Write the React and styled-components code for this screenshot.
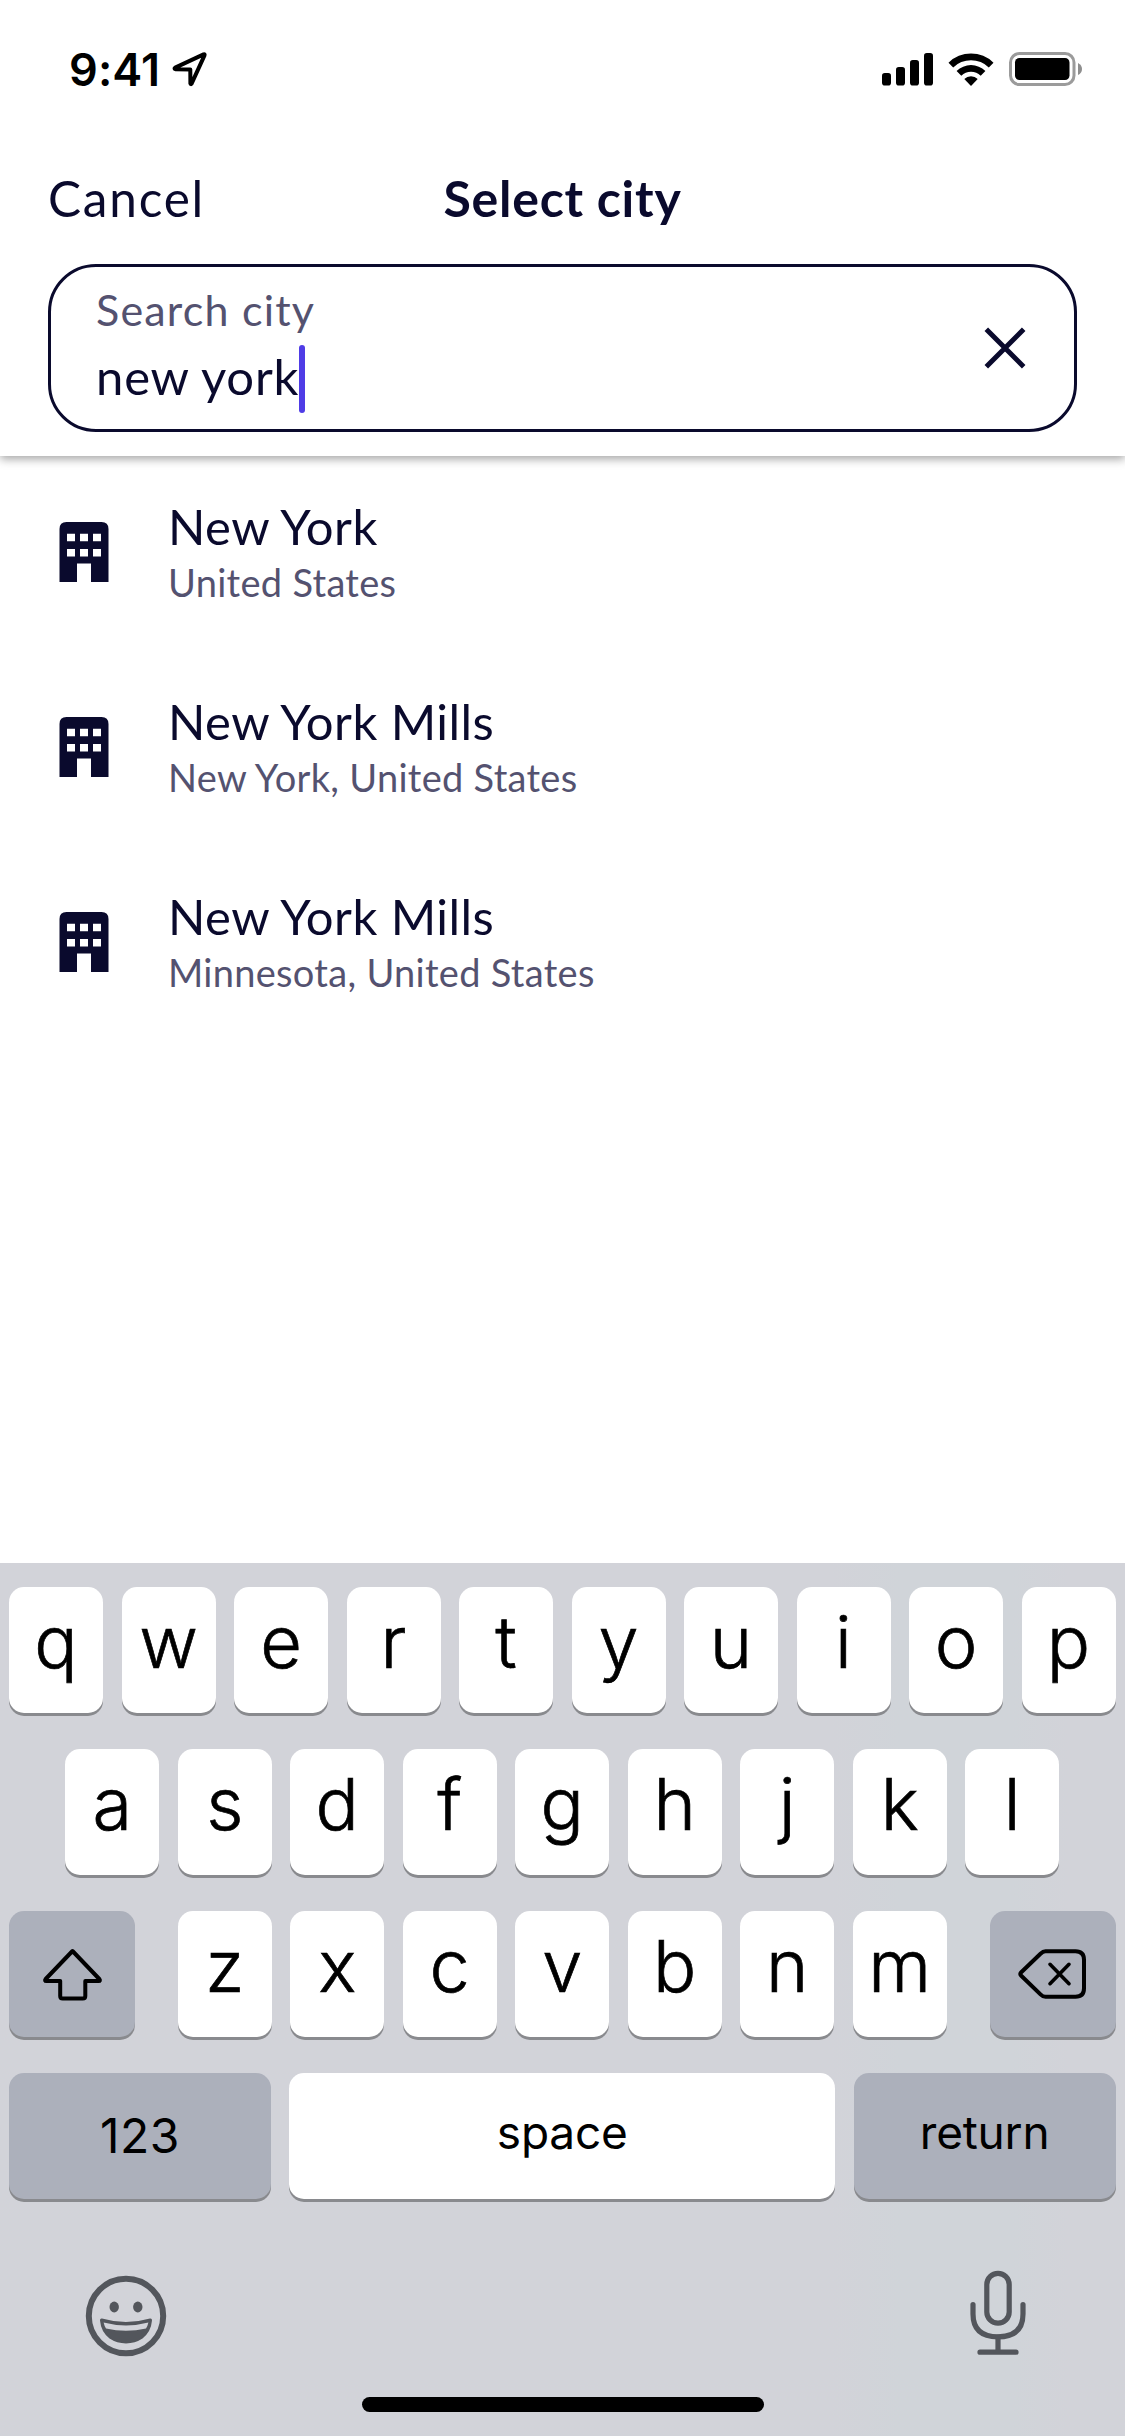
import React from "react";
import styled, { createGlobalStyle } from "styled-components";

const cities = [
    { id: 1, name: "New York", region: "United States" },
    { id: 2, name: "New York Mills", region: "New York, United States" },
    { id: 3, name: "New York Mills", region: "Minnesota, United States" },
];

const topKeys = "qwertyuiop".split("");
const middleKeys = "asdfghjkl".split("");
const bottomKeys = "zxcvbnm".split("");

function StatusBar() {
    return (
        <Status>
            <StatusLeft>
                <Time>9:41</Time>
                <svg width="36" height="36" viewBox="0 0 36 36">
                    <path
                        d="M3.2 16.6 L31.6 3.4 Q33 3 32.5 4.4 L19.6 32.6 Q18.8 33.8 18.4 32.4 L18.3 18.4 L3.4 18.2 Q1.8 17.6 3.2 16.6 Z"
                        fill="none"
                        stroke="#000"
                        strokeWidth="4"
                        strokeLinejoin="round"
                    />
                </svg>
            </StatusLeft>
            <StatusRight>
                <svg width="51" height="33" viewBox="0 0 51 33">
                    <rect x="0" y="20" width="9" height="12.5" rx="2.8" />
                    <rect x="14" y="14" width="9" height="18.5" rx="2.8" />
                    <rect x="28" y="7" width="9" height="25.5" rx="2.8" />
                    <rect x="42" y="0" width="9" height="32.5" rx="2.8" />
                </svg>
                <svg width="46" height="33" viewBox="0 0 46 33">
                    <path d="M0.5 9.7 A32 32 0 0 1 45.5 9.7 L40.8 14.5 A25.3 25.3 0 0 0 5.2 14.5 Z" />
                    <path d="M8.6 18 A20.5 20.5 0 0 1 37.4 18 L32.7 22.8 A13.9 13.9 0 0 0 13.3 22.8 Z" />
                    <path d="M16.3 26 A9.6 9.6 0 0 1 29.7 26 L23 33 Z" />
                </svg>
                <svg width="74" height="34" viewBox="0 0 74 34">
                    <rect
                        x="1.5"
                        y="1.5"
                        width="63.5"
                        height="31"
                        rx="9"
                        fill="none"
                        stroke="#9b9b9b"
                        strokeWidth="3"
                    />
                    <rect x="6" y="6" width="54.5" height="22" rx="4.5" />
                    <path d="M69 11 Q73 13 73 17 Q73 21 69 23 Z" fill="#8e8e8e" />
                </svg>
            </StatusRight>
        </Status>
    );
}

function BuildingIcon() {
    return (
        <svg width="72" height="60" viewBox="0 0 72 60">
            <path
                fill="#0a0a2d"
                fillRule="evenodd"
                d="M18.5 0 H53.5 Q60.5 0 60.5 7 V60 H43 V41.5 H29 V60 H11.5 V7 Q11.5 0 18.5 0 Z M19 11.7 V19.2 H27 V11.7 Z M32 11.7 V19.2 H40 V11.7 Z M45 11.7 V19.2 H53 V11.7 Z M19 27 V34.6 H27 V27 Z M32 27 V34.6 H40 V27 Z M45 27 V34.6 H53 V27 Z"
            />
        </svg>
    );
}

function Keyboard() {
    return (
        <Board>
            <KeyRow>
                {topKeys.map((key) => (
                    <Key key={key}>{key}</Key>
                ))}
            </KeyRow>
            <KeyRow>
                {middleKeys.map((key) => (
                    <Key key={key}>{key}</Key>
                ))}
            </KeyRow>
            <KeyRow $spread>
                <ActionKey $width="126px">
                    <svg width="62" height="54" viewBox="0 0 62 54">
                        <path
                            d="M31.5 4 L58.3 32 Q59.8 34 57.6 34 H44.3 V49 Q44.3 51.5 41.8 51.5 H21.7 Q19.2 51.5 19.2 49 V34 H5.4 Q3.2 34 4.7 32 Z"
                            fill="none"
                            stroke="#000"
                            strokeWidth="4"
                            strokeLinejoin="round"
                        />
                    </svg>
                </ActionKey>
                <KeyGroup>
                    {bottomKeys.map((key) => (
                        <Key key={key}>{key}</Key>
                    ))}
                </KeyGroup>
                <ActionKey $width="126px">
                    <svg width="72" height="52" viewBox="0 0 72 52">
                        <g
                            fill="none"
                            stroke="#000"
                            strokeWidth="4"
                            strokeLinecap="round"
                            strokeLinejoin="round"
                        >
                            <path d="M28.5 3.2 H58.5 Q67 3.2 67 11.7 V40.3 Q67 48.8 58.5 48.8 H28.5 Q26 48.8 23.5 46.3 L4 27.5 Q2.5 26 4 24.5 L23.5 5.7 Q26 3.2 28.5 3.2 Z" />
                            <path
                                d="M33 16.3 L52 35.7 M52 16.3 L33 35.7"
                                strokeWidth="3.6"
                            />
                        </g>
                    </svg>
                </ActionKey>
            </KeyRow>
            <KeyRow>
                <ActionKey $width="261.75px">
                    <KeyLabel $number>123</KeyLabel>
                </ActionKey>
                <SpaceKey>
                    <KeyLabel>space</KeyLabel>
                </SpaceKey>
                <ActionKey $width="261.75px">
                    <KeyLabel>return</KeyLabel>
                </ActionKey>
            </KeyRow>
            <BoardFooter>
                <svg width="82" height="90" viewBox="0 0 82 90">
                    <circle
                        cx="41"
                        cy="46"
                        r="37.2"
                        fill="none"
                        stroke="#53565c"
                        strokeWidth="6"
                    />
                    <ellipse cx="29.2" cy="37" rx="4.7" ry="5.4" fill="#53565c" />
                    <ellipse cx="52.8" cy="37" rx="4.7" ry="5.4" fill="#53565c" />
                    <path
                        fill="#53565c"
                        fillRule="evenodd"
                        d="M17 48.6 Q41 55.6 65 48.6 Q67.2 48.3 67 50.6 Q66 62 57.5 68.5 Q50 73.4 41 73.4 Q32 73.4 24.5 68.5 Q16 62 15 50.6 Q14.8 48.3 17 48.6 Z M18.6 52.5 Q19.3 55.8 21 58.4 Q41 63 61 58.4 Q62.7 55.8 63.4 52.5 Q41 58.4 18.6 52.5 Z"
                    />
                </svg>
                <svg width="58" height="90" viewBox="0 0 58 90">
                    <g fill="none" stroke="#53565c" strokeWidth="5.2" strokeLinecap="round">
                        <rect x="17.8" y="3.4" width="22.4" height="49.8" rx="11.2" />
                        <path d="M4 34.6 V44 Q4 66.8 29 66.8 Q54 66.8 54 44 V34.6" />
                        <path d="M29 67 V82 M11 82.2 H47" />
                    </g>
                </svg>
            </BoardFooter>
            <HomeIndicator />
        </Board>
    );
}

function App() {
    return (
        <Screen>
            <GlobalStyle />
            <Header>
                <StatusBar />
                <NavBar>
                    <Cancel>Cancel</Cancel>
                    <Title>Select city</Title>
                </NavBar>
                <SearchBox>
                    <Field>
                        <Label>Search city</Label>
                        <Value>
                            <span>new york</span>
                            <Caret />
                        </Value>
                    </Field>
                    <svg width="42" height="42" viewBox="0 0 42 42">
                        <path
                            d="M2.3 2.3 L39.7 39.7 M39.7 2.3 L2.3 39.7"
                            stroke="#0a0a2d"
                            strokeWidth="5"
                        />
                    </svg>
                </SearchBox>
            </Header>
            <List>
                {cities.map((city) => (
                    <Row key={city.id}>
                        <BuildingIcon />
                        <div>
                            <Name>{city.name}</Name>
                            <Region>{city.region}</Region>
                        </div>
                    </Row>
                ))}
            </List>
            <Keyboard />
        </Screen>
    );
}

const GlobalStyle = createGlobalStyle`
    * {
        box-sizing: border-box;
    }
    body {
        margin: 0;
        background-color: #fff;
    }
    svg {
        display: block;
        flex-shrink: 0;
    }
`;

const Screen = styled.div`
    display: flex;
    flex-direction: column;
    width: 1125px;
    height: 2436px;
    overflow: hidden;
    color: #0a0a2d;
    background-color: #fff;
    font-family: Lato, "Open Sans", sans-serif;
`;

const Header = styled.header`
    height: 456px;
    box-shadow: 0 3px 9px rgba(0, 0, 0, 0.36);
`;

const Status = styled.div`
    display: flex;
    align-items: center;
    justify-content: space-between;
    height: 138px;
    padding: 0 42px 0 69px;
`;
const StatusLeft = styled.div`
    display: flex;
    align-items: center;
    gap: 13px;
`;
const StatusRight = styled.div`
    display: flex;
    align-items: center;
    gap: 15px;
`;
const Time = styled.span`
    width: 90px;
    color: #000;
    font-family: Inter, sans-serif;
    font-size: 45px;
    font-weight: 600;
    letter-spacing: 0.1px;
    white-space: nowrap;
`;

const NavBar = styled.nav`
    display: grid;
    grid-template-columns: 1fr auto 1fr;
    align-items: center;
    height: 119px;
    padding: 0 48px;
    font-size: 49.5px;
    line-height: 60px;
`;
const Cancel = styled.span`
    letter-spacing: 1.8px;
`;
const Title = styled.h1`
    margin: 0;
    font-size: 50px;
    font-weight: 700;
    letter-spacing: 0.75px;
`;

const SearchBox = styled.div`
    display: flex;
    align-items: center;
    justify-content: space-between;
    height: 168px;
    margin: 7px 48px 0;
    padding: 0 48px 0 45px;
    border: 3px solid #0a0a2d;
    border-radius: 48px;
`;
const Field = styled.div`
    display: flex;
    flex-direction: column;
    gap: 10px;
    height: 162px;
    padding-top: 18px;
`;
const Label = styled.span`
    color: #545270;
    font-size: 43px;
    line-height: 50px;
    letter-spacing: 1.2px;
`;
const Value = styled.div`
    display: flex;
    font-size: 49px;
    line-height: 63px;
    letter-spacing: 0.8px;
`;
const Caret = styled.i`
    width: 6px;
    height: 68px;
    border-radius: 3px;
    background-color: #4f3ce6;
`;

const List = styled.main`
    display: flex;
    flex-direction: column;
    gap: 3px;
`;
const Row = styled.div`
    display: flex;
    align-items: center;
    gap: 48px;
    height: 192px;
    padding: 0 48px;
`;
const Name = styled.div`
    font-size: 49px;
    line-height: 60px;
    letter-spacing: 0.45px;
`;
const Region = styled.div`
    color: #545270;
    font-size: 38px;
    line-height: 52px;
    letter-spacing: 0.3px;
`;

const Board = styled.section`
    display: flex;
    flex-direction: column;
    align-items: center;
    height: 873px;
    margin-top: auto;
    padding: 24px 9.5px 24px 9px;
    color: #000;
    background: linear-gradient(
        to right,
        #d2d3d9 74%,
        #d0d4d9 80%,
        #d0d4d9 90%,
        #d2d3d9 95%
    );
    font-family: Inter, sans-serif;
`;
const KeyRow = styled.div`
    display: flex;
    justify-content: ${(props) => (props.$spread ? "space-between" : "center")};
    gap: ${(props) => (props.$spread ? "0" : "18.5px")};
    width: 100%;
    margin-bottom: 36px;
`;
const KeyGroup = styled.div`
    display: flex;
    gap: 18.5px;
`;
const Key = styled.div`
    width: 94px;
    height: 126px;
    border-radius: 15px;
    background-color: #fff;
    box-shadow: 0 3px 0 #898a8e;
    font-size: 72px;
    font-weight: 300;
    line-height: 110px;
    text-align: center;
    -webkit-text-stroke: 0.7px #000;
`;
const ActionKey = styled.div`
    display: flex;
    align-items: center;
    justify-content: center;
    width: ${(props) => props.$width};
    height: 126px;
    border-radius: 15px;
    background-color: #acb0bb;
    box-shadow: 0 3px 0 #898a8e;
`;
const SpaceKey = styled(ActionKey)`
    flex: 1;
    background-color: #fff;
`;
const KeyLabel = styled.span`
    font-size: ${(props) => (props.$number ? "48px" : "46px")};
    line-height: 60px;
    letter-spacing: ${(props) => (props.$number ? "0.4px" : "-0.2px")};
    padding-bottom: ${(props) => (props.$number ? "0" : "8px")};
`;

const BoardFooter = styled.div`
    display: flex;
    justify-content: space-between;
    width: 100%;
    margin-top: 35px;
    padding: 0 89px 0 76px;
`;
const HomeIndicator = styled.div`
    width: 402px;
    height: 15px;
    margin: 37px 0 0 1px;
    border-radius: 8px;
    background-color: #000;
`;

export default App;
